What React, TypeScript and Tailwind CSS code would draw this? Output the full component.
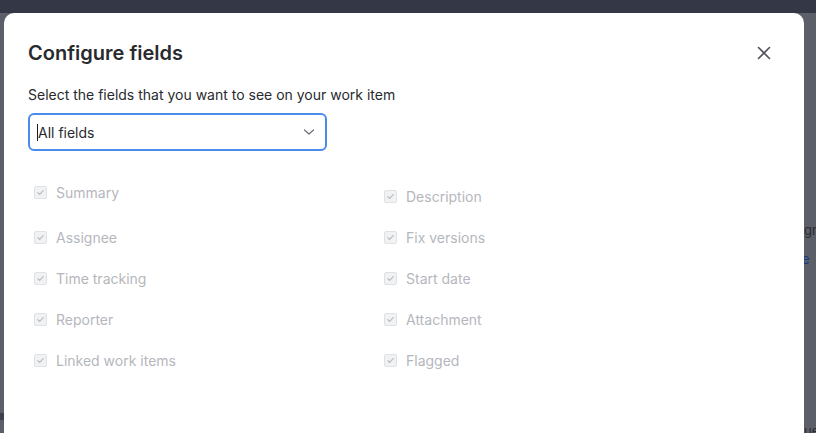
import React from "react";

const left = ["Summary", "Assignee", "Time tracking", "Reporter", "Linked work items"];
const right = ["Description", "Fix versions", "Start date", "Attachment", "Flagged"];

function Box() {
  return (
    <span className="flex h-[13px] w-[13px] shrink-0 items-center justify-center rounded-[2px] border border-[#e0e1e4] bg-[#f1f2f4]">
      <svg width="9" height="9" viewBox="0 0 10 10" fill="none">
        <path d="M2 5.2 L4.1 7.2 L8 2.8" stroke="#b9bcc2" strokeWidth="1.3" strokeLinecap="round" strokeLinejoin="round" />
      </svg>
    </span>
  );
}

function Item({ label, extra = "" }: { label: string; extra?: string }) {
  return (
    <div className={"flex h-[41px] items-center gap-[9px] " + extra}>
      <Box />
      <span className="text-[14px] text-[#b5b7bd]">{label}</span>
    </div>
  );
}

export default function App() {
  return (
    <div
      className="relative h-[433px] w-[816px] overflow-hidden bg-[#5c5f68]"
      style={{ fontFamily: "Inter, 'Noto Sans', sans-serif" }}
    >
      <div className="h-[13px] w-full bg-[#343846]" />
      <span className="absolute left-[804px] top-[221px] text-[13px] text-[#2a2d33]">gn</span>
      <span className="absolute left-[802px] top-[250px] text-[13px] text-[#1d3a86]">e</span>
      <span className="absolute left-[804px] top-[422px] text-[13px] text-[#2a2d33]">ue</span>
      <div className="absolute left-0 top-[413px] h-[7px] w-[4px] bg-[#3c404c]" />

      <div className="absolute left-[4px] top-[13px] h-[440px] w-[800px] rounded-[10px] bg-white px-[24px]">
        <div className="flex items-center justify-between pt-[26px]">
          <h1 className="text-[20px] font-semibold leading-[28px] text-[#292a2e]">Configure fields</h1>
          <svg className="mr-[9px]" width="14" height="14" viewBox="0 0 14 14" fill="none">
            <path d="M1.5 1.5 L12.5 12.5 M12.5 1.5 L1.5 12.5" stroke="#505258" strokeWidth="1.6" strokeLinecap="round" />
          </svg>
        </div>
        <p className="mt-[18px] text-[14px] leading-[20px] text-[#292a2e]">
          Select the fields that you want to see on your work item
        </p>
        <div className="mt-[8px] flex h-[38px] w-[299px] items-center justify-between rounded-[6px] border-2 border-[#4b8bec] pl-[7px] pr-[10px]">
          <div className="flex items-center">
            <span className="h-[17px] w-[1px] bg-[#1f1f1f]" />
            <span className="text-[14px] text-[#292a2e]">All fields</span>
          </div>
          <svg width="12" height="8" viewBox="0 0 12 8" fill="none">
            <path d="M1.5 2 L6 6 L10.5 2" stroke="#6b6e76" strokeWidth="1.2" strokeLinecap="round" strokeLinejoin="round" />
          </svg>
        </div>
        <div className="mt-[25px] flex pl-[6px]">
          <div className="flex w-[350px] flex-col">
            <Item label={left[0]} extra="-mt-[4px] mb-[4px]" />
            {left.slice(1).map((l) => (
              <Item key={l} label={l} />
            ))}
          </div>
          <div className="flex flex-col">
            {right.map((l) => (
              <Item key={l} label={l} />
            ))}
          </div>
        </div>
      </div>
    </div>
  );
}
